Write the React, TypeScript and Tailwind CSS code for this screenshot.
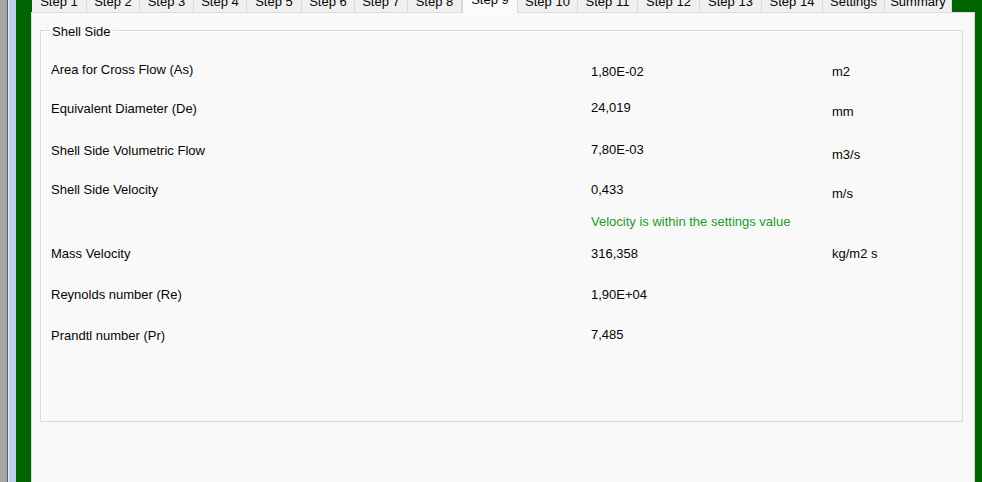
const tabs = [
  { label: "Step 1", w: "w-[55px]" },
  { label: "Step 2", w: "w-[53px]" },
  { label: "Step 3", w: "w-[54px]" },
  { label: "Step 4", w: "w-[53px]" },
  { label: "Step 5", w: "w-[55px]" },
  { label: "Step 6", w: "w-[53px]" },
  { label: "Step 7", w: "w-[53px]" },
  { label: "Step 8", w: "w-[54px]" },
  { label: "Step 9", w: "w-[56px]", active: true },
  { label: "Step 10", w: "w-[60px]" },
  { label: "Step 11", w: "w-[60px]" },
  { label: "Step 12", w: "w-[62px]" },
  { label: "Step 13", w: "w-[62px]" },
  { label: "Step 14", w: "w-[61px]" },
  { label: "Settings", w: "w-[62px]" },
  { label: "Summary", w: "w-[67px]" },
];

function Tab({ label, w, active }: { label: string; w: string; active?: boolean }) {
  if (active) {
    return (
      <div
        className={`${w} h-[21px] -mb-px z-10 shrink-0 bg-[#fbfbfb] border-x border-[#d9d9d9] text-center leading-[15px]`}
      >
        {label}
      </div>
    );
  }
  return (
    <div
      className={`${w} h-[18px] shrink-0 bg-[#f0f0f0] border-r border-[#d9d9d9] text-center leading-[15px]`}
    >
      {label}
    </div>
  );
}

export default function App() {
  return (
    <div
      className="w-[982px] h-[482px] flex overflow-hidden text-[13px] text-[#050505]"
      style={{ fontFamily: '"Liberation Sans", Arial, sans-serif' }}
    >
      <div className="w-[7px] bg-[#a5a5a5]" />
      <div className="w-px bg-[#5e5e5e]" />
      <div className="w-px bg-[#e9e9e9]" />
      <div className="w-[7px] bg-[#b9d1ea]" />

      <div className="flex-1 flex flex-col bg-[#006400] pl-[15px] pr-[7px]">
        {/* tab strip */}
        <div className="h-[12px] flex items-end pl-px">
          {tabs.map((t) => (
            <Tab key={t.label} {...t} />
          ))}
        </div>

        {/* page */}
        <div className="flex-1 bg-[#f9f9f9] border-t border-x border-[#dadada] pl-[8px] pt-[17px]">
          <div className="relative w-[923px] h-[392px] border border-[#dadada] shadow-[inset_1px_1px_0_#ffffff]">
            <div className="absolute left-[9px] -top-[7px] px-[2px] bg-[#f9f9f9] leading-[15px]">
              Shell Side
            </div>

            <div className="pt-[29px] pl-[10px] leading-[15px]">
              <div className="h-[40px] grid grid-cols-[540px_241px_1fr] items-start">
                <div className="mt-[2px]">Area for Cross Flow (As)</div>
                <div className="mt-[4px]">1,80E-02</div>
                <div className="mt-[4px]">m2</div>
              </div>
              <div className="h-[42px] grid grid-cols-[540px_241px_1fr] items-start">
                <div className="mt-[1px]">Equivalent Diameter (De)</div>
                <div>24,019</div>
                <div className="mt-[4px]">mm</div>
              </div>
              <div className="h-[40px] grid grid-cols-[540px_241px_1fr] items-start">
                <div className="mt-[1px]">Shell Side Volumetric Flow</div>
                <div>7,80E-03</div>
                <div className="mt-[5px]">m3/s</div>
              </div>
              <div className="h-[31px] grid grid-cols-[540px_241px_1fr] items-start">
                <div>Shell Side Velocity</div>
                <div>0,433</div>
                <div className="mt-[4px]">m/s</div>
              </div>
              <div className="h-[33px] grid grid-cols-[540px_241px_1fr] items-start">
                <div />
                <div className="col-span-2 mt-[1px] text-[#229a2a]">Velocity is within the settings value</div>
              </div>
              <div className="h-[41px] grid grid-cols-[540px_241px_1fr] items-start">
                <div>Mass Velocity</div>
                <div>316,358</div>
                <div>kg/m2 s</div>
              </div>
              <div className="h-[40px] grid grid-cols-[540px_241px_1fr] items-start">
                <div>Reynolds number (Re)</div>
                <div>1,90E+04</div>
                <div />
              </div>
              <div className="h-[20px] grid grid-cols-[540px_241px_1fr] items-start">
                <div className="mt-[1px]">Prandtl number (Pr)</div>
                <div>7,485</div>
                <div />
              </div>
            </div>
          </div>
        </div>
      </div>
    </div>
  );
}
